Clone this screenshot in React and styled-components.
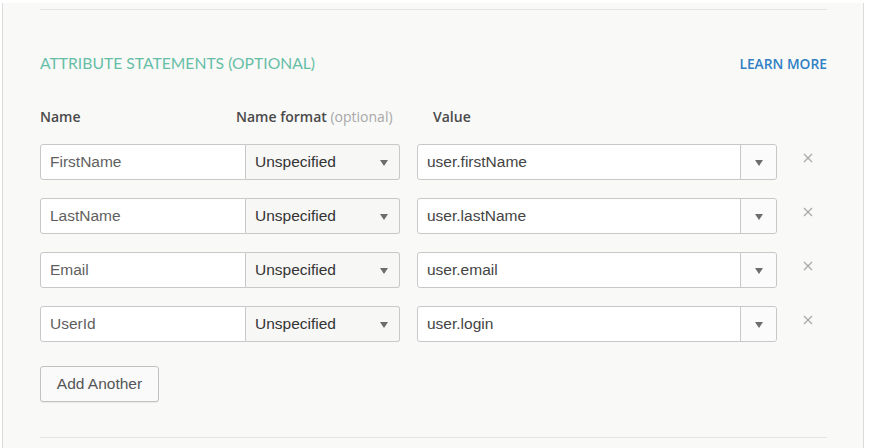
import React from 'react';
import styled, { createGlobalStyle } from 'styled-components';

const GlobalStyle = createGlobalStyle`
  body {
    margin: 0;
    background: #ffffff;
    font-family: "Liberation Sans", Arial, sans-serif;
  }
`;

const Panel = styled.div`
  margin: 3px 0 0 2px;
  width: 862px;
  height: 445px;
  box-sizing: border-box;
  background: #f9f9f8;
  border-left: 1px solid #dcdcdc;
  border-right: 1px solid #dcdcdc;
  padding: 6px 35px 0 37px;
`;

const Divider = styled.div`
  width: 787px;
  height: 1px;
  background: #e3e3e3;
`;

const SectionHead = styled.div`
  display: flex;
  justify-content: space-between;
  align-items: center;
  width: 787px;
  height: 20px;
  margin-top: 43px;
`;

const Title = styled.h2`
  margin: 0;
  font-family: Lato, "Open Sans", sans-serif;
  font-weight: 400;
  font-size: 15.7px;
  color: #66bea6;
`;

const LearnMore = styled.a`
  font-family: "Open Sans", Lato, sans-serif;
  font-weight: 600;
  font-size: 13.8px;
  color: #2f80c4;
  text-decoration: none;
`;

const Grid = styled.div`
  display: grid;
  grid-template-columns: 206px 154px 360px 50px;
  margin-top: 34px;
`;

const HeadCell = styled.div`
  font-family: "Open Sans", Lato, sans-serif;
  font-weight: 600;
  font-size: 14px;
  color: #4a4a4a;
  height: 20px;
  line-height: 20px;
  margin-left: ${(p) => p.$offset || 0}px;
  margin-bottom: 17px;
  white-space: nowrap;
`;

const Optional = styled.span`
  font-weight: 400;
  color: #a8a8a8;
`;

const Rows = styled.div`
  display: flex;
  flex-direction: column;
  gap: 18px;
`;

const Row = styled.div`
  display: flex;
  align-items: center;
  height: 36px;
`;

const Box = styled.div`
  box-sizing: border-box;
  height: 36px;
  display: flex;
  align-items: center;
  border: 1px solid #c8c8c8;
  font-size: 15.5px;
  color: #5f5f5f;
`;

const NameInput = styled(Box)`
  width: 206px;
  background: #ffffff;
  border-radius: 3px 0 0 3px;
  padding-left: 9px;
`;

const FormatSelect = styled(Box)`
  width: 154px;
  background: #f7f7f6;
  border-left: none;
  border-radius: 0 3px 3px 0;
  padding: 0 11px 0 9px;
  justify-content: space-between;
  color: #333;
`;

const ValueBox = styled(Box)`
  width: 360px;
  margin-left: 17px;
  background: #ffffff;
  border-radius: 3px;
  padding-left: 9px;
  color: #444;
`;

const ValueText = styled.span`
  flex: 1;
`;

const DropButton = styled.div`
  width: 35px;
  height: 34px;
  border-left: 1px solid #c8c8c8;
  background: #fbfbfb;
  border-radius: 0 3px 3px 0;
  display: flex;
  align-items: center;
  justify-content: center;
`;

const Caret = styled.span`
  width: 0;
  height: 0;
  border-left: 4px solid transparent;
  border-right: 4px solid transparent;
  border-top: 6px solid #6d6d6d;
  margin-top: 2px;
`;

const Remove = styled.button`
  margin-left: 24px;
  width: 14px;
  height: 14px;
  padding: 0;
  border: none;
  background: none;
  margin-top: -8px;
  display: flex;
  align-items: center;
  justify-content: center;
`;

const AddButton = styled.button`
  display: block;
  margin-top: 24px;
  width: 119px;
  height: 36px;
  border: 1px solid #c2c2c2;
  border-radius: 3px;
  background: #fafafa;
  font-family: "Liberation Sans", Arial, sans-serif;
  font-size: 15.5px;
  color: #555;
  box-shadow: 0 1px 0 rgba(0, 0, 0, 0.06);
`;

const BottomDivider = styled(Divider)`
  margin-top: 35px;
`;

const rows = [
  { name: 'FirstName', value: 'user.firstName' },
  { name: 'LastName', value: 'user.lastName' },
  { name: 'Email', value: 'user.email' },
  { name: 'UserId', value: 'user.login' },
];

const App = () => {
  return (
    <>
      <GlobalStyle />
      <Panel>
        <Divider />
        <SectionHead>
          <Title>ATTRIBUTE STATEMENTS (OPTIONAL)</Title>
          <LearnMore href="#">LEARN MORE</LearnMore>
        </SectionHead>
        <Grid>
          <HeadCell>Name</HeadCell>
          <HeadCell $offset={-10}>
            Name format <Optional>(optional)</Optional>
          </HeadCell>
          <HeadCell $offset={33}>Value</HeadCell>
          <div />
        </Grid>
        <Rows>
          {rows.map((r) => (
            <Row key={r.name}>
              <NameInput>{r.name}</NameInput>
              <FormatSelect>
                Unspecified
                <Caret />
              </FormatSelect>
              <ValueBox>
                <ValueText>{r.value}</ValueText>
                <DropButton>
                  <Caret />
                </DropButton>
              </ValueBox>
              <Remove aria-label="remove">
                <svg width="10" height="10" viewBox="0 0 10 10">
                  <path d="M1 1 L9 9 M9 1 L1 9" stroke="#a9a9a9" strokeWidth="1.3" />
                </svg>
              </Remove>
            </Row>
          ))}
        </Rows>
        <AddButton>Add Another</AddButton>
        <BottomDivider />
      </Panel>
    </>
  );
};

export default App;
